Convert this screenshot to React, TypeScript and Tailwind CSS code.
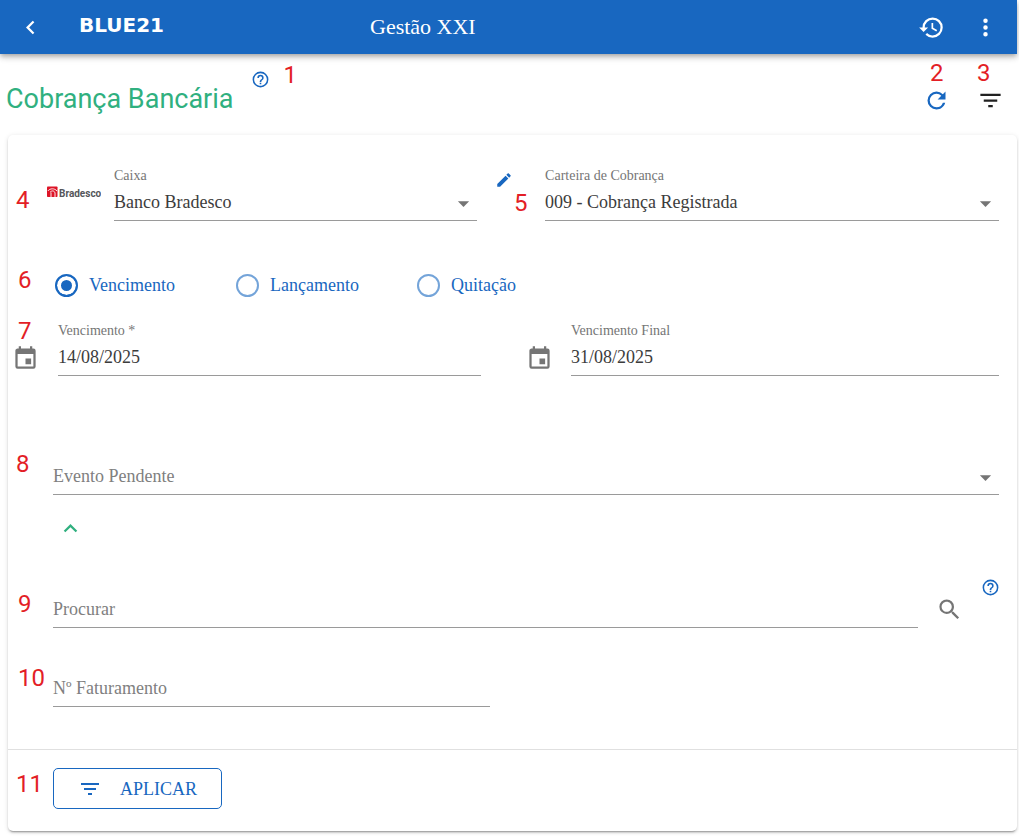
import type { ReactNode } from "react";

const ICONS = {
  chevronLeft: "M15.41 16.58 10.83 12l4.58-4.59L14 6l-6 6 6 6 1.41-1.42z",
  chevronUp: "M7.41 15.41 12 10.83l4.59 4.58L18 14l-6-6-6 6 1.41 1.41z",
  history:
    "M13.5 8H12v5l4.28 2.54.72-1.21-3.5-2.08V8M13 3a9 9 0 0 0-9 9H1l3.96 4.03L9 12H6a7 7 0 0 1 7-7 7 7 0 0 1 7 7 7 7 0 0 1-7 7c-1.93 0-3.68-.79-4.94-2.06l-1.42 1.42A8.896 8.896 0 0 0 13 21a9 9 0 0 0 9-9 9 9 0 0 0-9-9",
  dots: "M12 16a2 2 0 1 1 0 4 2 2 0 0 1 0-4m0-6a2 2 0 1 1 0 4 2 2 0 0 1 0-4m0-6a2 2 0 1 1 0 4 2 2 0 0 1 0-4z",
  help: "M11 18h2v-2h-2v2m1-16A10 10 0 0 0 2 12a10 10 0 0 0 10 10 10 10 0 0 0 10-10A10 10 0 0 0 12 2m0 18c-4.41 0-8-3.59-8-8s3.59-8 8-8 8 3.59 8 8-3.59 8-8 8m0-14a4 4 0 0 0-4 4h2a2 2 0 0 1 2-2 2 2 0 0 1 2 2c0 2-3 1.75-3 5h2c0-2.25 3-2.5 3-5a4 4 0 0 0-4-4z",
  refresh:
    "M17.65 6.35A7.958 7.958 0 0 0 12 4a8 8 0 0 0-8 8 8 8 0 0 0 8 8c3.73 0 6.84-2.55 7.73-6h-2.08A5.99 5.99 0 0 1 12 18a6 6 0 0 1-6-6 6 6 0 0 1 6-6c1.66 0 3.14.69 4.22 1.78L13 11h7V4l-2.35 2.35z",
  filter: "M6 13h12v-2H6M3 6v2h18V6M10 18h4v-2h-4v2z",
  pencil:
    "M20.71 7.04c.39-.39.39-1.04 0-1.41l-2.34-2.34c-.37-.39-1.02-.39-1.41 0l-1.84 1.83 3.75 3.75M3 17.25V21h3.75L17.81 9.93l-3.75-3.75L3 17.25z",
  menuDown: "M7 10l5 5 5-5H7z",
  calendar:
    "M19 19H5V8h14m-3-7v2H8V1H6v2H5c-1.11 0-2 .89-2 2v14a2 2 0 0 0 2 2h14a2 2 0 0 0 2-2V5a2 2 0 0 0-2-2h-1V1m-1 11h-5v5h5v-5z",
  search:
    "M9.5 3A6.5 6.5 0 0 1 16 9.5c0 1.61-.59 3.09-1.56 4.23l.27.27h.79l5 5-1.5 1.5-5-5v-.79l-.27-.27A6.516 6.516 0 0 1 9.5 16 6.5 6.5 0 0 1 3 9.5 6.5 6.5 0 0 1 9.5 3m0 2C7 5 5 7 5 9.5S7 14 9.5 14 14 12 14 9.5 12 5 9.5 5z",
};

function Icon({ name, className = "size-[27px]" }: { name: keyof typeof ICONS; className?: string }) {
  return (
    <svg viewBox="0 0 24 24" className={`${className} shrink-0 fill-current`} aria-hidden="true">
      <path d={ICONS[name]} />
    </svg>
  );
}

function Mark({ children, className = "" }: { children: ReactNode; className?: string }) {
  return (
    <span className={`block font-['Roboto',sans-serif] text-2xl leading-7 text-[#e31e26] ${className}`}>
      {children}
    </span>
  );
}

const CONTROL =
  "block h-[35px] w-full appearance-none rounded-none border-b border-[#9a9a9a] bg-transparent pb-[2px] text-lg text-[#3c3c3c] outline-none placeholder:text-[#808080] placeholder:opacity-100";

function TextField({ id, label, value, placeholder }: { id: string; label?: string; value?: string; placeholder?: string }) {
  return (
    <div className="min-w-0">
      {label && (
        <label htmlFor={id} className="block text-sm leading-5 text-[#757575]">
          {label}
        </label>
      )}
      <input id={id} type="text" defaultValue={value} placeholder={placeholder} aria-label={label ? undefined : placeholder} className={CONTROL} />
    </div>
  );
}

function SelectField({ id, label, value, muted }: { id: string; label?: string; value: string; muted?: boolean }) {
  return (
    <div className="min-w-0">
      {label && (
        <label htmlFor={id} className="block text-sm leading-5 text-[#757575]">
          {label}
        </label>
      )}
      <div className="relative">
        <select id={id} aria-label={label ? undefined : value} className={`${CONTROL} ${muted ? "text-[#808080]" : ""}`}>
          <option>{value}</option>
        </select>
        <span className="pointer-events-none absolute top-1 right-0 text-[#757575]">
          <Icon name="menuDown" />
        </span>
      </div>
    </div>
  );
}

function BradescoLogo() {
  return (
    <svg viewBox="0 0 54 14" className="h-[14px] w-[54px]" role="img" aria-label="Bradesco">
      <rect x="0" y="0.500" width="10.500" height="10.500" rx="0.800" fill="#dd1427" />
      <path
        d="M0.800 5C3 2.200 7.500 2 10 5M3 6.300C5 4.200 7.300 4.500 8 7V11M4 6.500v4.500"
        fill="none"
        stroke="#fff"
        strokeWidth="0.900"
      />
      <text x="12" y="11" className="fill-[#55565a] font-['Roboto',sans-serif] text-[10px] font-bold">
        Bradesco
      </text>
    </svg>
  );
}

export default function App() {
  return (
    <div className="min-h-screen bg-white pr-[2px] pb-[5px] font-['Liberation_Serif',serif]">
      <header className="relative flex h-[54px] items-center bg-[#1867c0] pr-[18px] pl-[17px] text-white shadow-[0_2px_4px_-1px_rgba(0,0,0,0.2),0_4px_5px_rgba(0,0,0,0.14),0_1px_10px_rgba(0,0,0,0.12)]">
        <button type="button" aria-label="Voltar">
          <Icon name="chevronLeft" />
        </button>
        <span className="ml-[35px] w-[291px] pb-1 font-['DejaVu_Sans',sans-serif] text-xl leading-6 font-bold">BLUE21</span>
        <h1 className="flex-1 text-[22px] leading-7">Gestão XXI</h1>
        <div className="flex gap-[27px]">
          <button type="button" aria-label="Histórico">
            <Icon name="history" />
          </button>
          <button type="button" aria-label="Mais opções">
            <Icon name="dots" />
          </button>
        </div>
      </header>

      <div className="flex h-[81px] items-start pt-[5px] pr-[13px] pl-[6px]">
        <h2 className="mt-[22px] font-['Roboto',sans-serif] text-[27px] leading-9 text-[#30b07f]">Cobrança Bancária</h2>
        <button type="button" aria-label="Ajuda" className="mt-[11px] ml-[17px] text-[#1867c0]">
          <Icon name="help" className="size-[19px]" />
        </button>
        <Mark className="mt-[2px] ml-[14px]">1</Mark>
        <div className="ml-auto flex items-end gap-[27px]">
          <div>
            <Mark className="pl-[7px]">2</Mark>
            <button type="button" aria-label="Atualizar" className="block text-[#1867c0]">
              <Icon name="refresh" />
            </button>
          </div>
          <div>
            <Mark>3</Mark>
            <button type="button" aria-label="Filtrar" className="block text-[#212121]">
              <Icon name="filter" />
            </button>
          </div>
        </div>
      </div>

      <form
        onSubmit={(e) => e.preventDefault()}
        className="ml-2 rounded-[5px] bg-white shadow-[0_3px_1px_-2px_rgba(0,0,0,0.2),0_2px_2px_rgba(0,0,0,0.14),0_1px_5px_rgba(0,0,0,0.12)]"
      >
        <div className="border-b border-[#e0e0e0] pt-[31px] pr-[18px] pb-[42px]">
          <div className="grid grid-cols-[106px_4fr_68px_5fr]">
            <div className="flex items-start pt-5 pl-2">
              <Mark>4</Mark>
              <span className="ml-[17px]">
                <BradescoLogo />
              </span>
            </div>
            <SelectField id="caixa" label="Caixa" value="Banco Bradesco" />
            <div className="flex items-start pt-[5px] pl-[18px]">
              <button type="button" aria-label="Editar" className="text-[#1867c0]">
                <Icon name="pencil" className="size-[18px]" />
              </button>
              <Mark className="mt-[18px] ml-px">5</Mark>
            </div>
            <SelectField id="carteira" label="Carteira de Cobrança" value="009 - Cobrança Registrada" />
          </div>

          <div className="mt-[45px] flex items-center">
            <Mark className="w-[47px] pb-[10px] pl-[10px]">6</Mark>
            {["Vencimento", "Lançamento", "Quitação"].map((option, i) => (
              <label key={option} className="flex w-[181px] items-center gap-[11px] text-lg leading-7 text-[#1867c0]">
                <input
                  type="radio"
                  name="tipo"
                  defaultChecked={i === 0}
                  className="size-[23px] appearance-none rounded-full border-2 border-[#74a4d9] checked:border-[#1867c0] checked:bg-[#1867c0] checked:shadow-[inset_0_0_0_4px_white]"
                />
                {option}
              </label>
            ))}
          </div>

          <div className="mt-[13px] grid grid-cols-[50px_423fr_90px_428fr] items-end">
            <div className="pb-1">
              <Mark className="pl-[10px]">7</Mark>
              <span className="ml-1 block text-[#757575]">
                <Icon name="calendar" />
              </span>
            </div>
            <TextField id="inicio" label="Vencimento *" value="14/08/2025" />
            <span className="pb-1 pl-[45px] text-[#757575]">
              <Icon name="calendar" />
            </span>
            <TextField id="fim" label="Vencimento Final" value="31/08/2025" />
          </div>

          <div className="mt-[74px] grid grid-cols-[45px_1fr]">
            <Mark className="pl-2">8</Mark>
            <div className="pt-[10px]">
              <SelectField id="evento" value="Evento Pendente" muted />
            </div>
          </div>

          <button type="button" aria-label="Recolher" className="mt-5 ml-[49px] block text-[#30b07f]">
            <Icon name="chevronUp" />
          </button>

          <div className="mt-9 grid grid-cols-[45px_1fr_81px] items-end">
            <Mark className="pb-[10px] pl-[10px]">9</Mark>
            <TextField id="procurar" placeholder="Procurar" />
            <div className="flex h-[50px] items-start pl-[18px]">
              <button type="button" aria-label="Procurar" className="mt-[18px] text-[#757575]">
                <Icon name="search" />
              </button>
              <button type="button" aria-label="Ajuda da procura" className="ml-[18px] text-[#1867c0]">
                <Icon name="help" className="size-[19px]" />
              </button>
            </div>
          </div>

          <div className="mt-9 grid grid-cols-[45px_6fr_7fr]">
            <Mark className="pl-[10px]">10</Mark>
            <div className="pt-2">
              <TextField id="faturamento" placeholder="Nº Faturamento" />
            </div>
          </div>
        </div>

        <div className="flex items-start pt-[18px] pb-[22px]">
          <Mark className="w-[45px] pt-[2px] pl-2">11</Mark>
          <button type="submit" className="flex h-[41px] items-center gap-[18px] rounded-[5px] border border-[#1867c0] px-6 text-lg text-[#1867c0]">
            <Icon name="filter" className="size-6" />
            APLICAR
          </button>
        </div>
      </form>
    </div>
  );
}
